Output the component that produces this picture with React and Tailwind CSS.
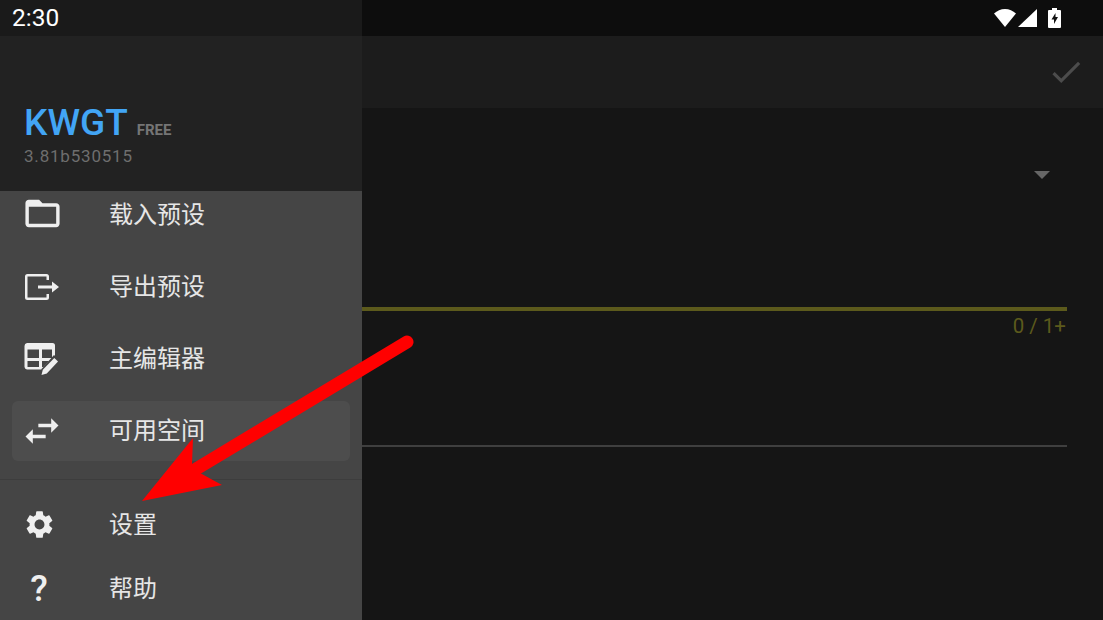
import React from "react";

const FONT = { fontFamily: '"Roboto", "Noto Sans CJK SC", sans-serif' };

function MenuIcon({ children, size = 41, className = "" }) {
  return (
    <svg width={size} height={size} viewBox="0 0 24 24" fill="#efefef" className={className}>
      {children}
    </svg>
  );
}

const icons = {
  folder: (
    <MenuIcon size={41}>
      <path d="M20 6h-8l-2-2H4c-1.1 0-1.99.9-1.99 2L2 18c0 1.1.9 2 2 2h16c1.1 0 2-.9 2-2V8c0-1.1-.9-2-2-2zm0 12H4V8h16v10z" />
    </MenuIcon>
  ),
  export: (
    <svg width="36" height="28" viewBox="0 0 36 28" fill="#efefef">
      <path d="M3.500 1h19a2.500 2.500 0 0 1 2.500 2.500V7h-2.500V3.500H3.500v21h19V21H25v3.500a2.500 2.500 0 0 1-2.500 2.500h-19A2.500 2.500 0 0 1 1 24.500v-21A2.500 2.500 0 0 1 3.500 1z" />
      <path d="M14 12.500h14V8.500l7 5.500-7 5.500v-4H14z" />
    </svg>
  ),
  table: (
    <svg width="36" height="33" viewBox="0 0 36 33" fill="#efefef">
      <path fillRule="evenodd" d="M3 0h25.500A2.500 2.500 0 0 1 31 2.500V13L19 26.500H3A3 3 0 0 1 .500 24V3A3 3 0 0 1 3 0zM3.500 6.500V15H15V6.500zM18 6.500V15h10V6.500zM3.500 18v6H15v-6zM18 18v6h1.500l5.500-6z" />
      <path d="M16 33.500l1.500-7.500L30 12l6 5.500L23 31.500z" fill="#454545" />
      <path d="M17.500 32l1.300-5.200L30.300 15l3.700 3.400L22.800 30.500z" />
    </svg>
  ),
  swap: (
    <MenuIcon size={44}>
      <path d="M6.99 11L3 15l3.99 4v-3H14v-2H6.99v-3zM21 9l-3.990-4v3H10v2h7.010v3L21 9z" />
    </MenuIcon>
  ),
  gear: (
    <MenuIcon size={33}>
      <path d="M19.140 12.940c.04-.3.060-.61.060-.94 0-.32-.020-.64-.070-.94l2.030-1.580a.49.49 0 0 0 .12-.61l-1.920-3.320a.488.488 0 0 0-.59-.22l-2.390.96c-.5-.38-1.030-.7-1.620-.94l-.36-2.540a.484.484 0 0 0-.48-.41h-3.840c-.24 0-.43.17-.47.41l-.36 2.540c-.59.24-1.130.57-1.620.94l-2.390-.96c-.22-.08-.47 0-.59.22L2.740 8.870c-.12.21-.08.47.12.61l2.030 1.580c-.05.3-.09.63-.09.94s.02.64.07.94l-2.030 1.580a.49.49 0 0 0-.12.61l1.920 3.320c.12.22.37.29.59.22l2.390-.96c.5.38 1.030.7 1.620.94l.36 2.540c.05.24.24.41.48.41h3.840c.24 0 .44-.17.47-.41l.36-2.540c.59-.24 1.130-.56 1.620-.94l2.390.96c.22.08.47 0 .59-.22l1.920-3.320c.12-.22.070-.47-.12-.61l-2.010-1.580zM12 15.600c-1.980 0-3.600-1.620-3.600-3.600s1.620-3.600 3.600-3.600 3.600 1.620 3.600 3.600-1.620 3.600-3.600 3.600z" />
    </MenuIcon>
  ),
  help: <span className="text-[36px] font-medium leading-none text-[#efefef]">?</span>,
};

function Item({ icon, label, iconClass = "", active, className = "" }) {
  return (
    <div
      className={`mx-3 flex h-[60px] items-center rounded-md ${active ? "bg-[#4d4d4d]" : ""} ${className}`}
    >
      <div className={`flex w-[60px] shrink-0 items-center justify-center ${iconClass}`}>{icon}</div>
      <span className="ml-[37px] text-2xl leading-none text-[#e6e6e6]">{label}</span>
    </div>
  );
}

export default function App() {
  return (
    <div className="relative h-[620px] w-[1103px] overflow-hidden bg-[#151515]" style={FONT}>
      {/* page behind the drawer */}
      <div className="flex h-9 items-center justify-end gap-[2px] bg-[#0d0d0d] pr-[42px]">
        <svg width="22" height="18" viewBox="0 0 22 18" fill="#fff">
          <path d="M11 18L0 4.500C3 1.800 6.800 0 11 0s8 1.800 11 4.500z" />
        </svg>
        <svg width="19" height="18" viewBox="0 0 19 18" fill="#fff">
          <path d="M19 0v18H0z" />
        </svg>
        <svg width="13" height="20" viewBox="0 0 13 20" className="ml-[9px]">
          <path d="M4 0h5v2h3a1 1 0 0 1 1 1v16a1 1 0 0 1-1 1H1a1 1 0 0 1-1-1V3a1 1 0 0 1 1-1h3z" fill="#fff" />
          <path d="M7.500 5L3.500 11.500h2.500V16l4-7H7.500z" fill="#111" />
        </svg>
      </div>
      <div className="flex h-[72px] items-center justify-end bg-[#1c1c1c] pr-[18px]">
        <svg width="38" height="38" viewBox="0 0 24 24" fill="#4c4c4c">
          <path d="M9 16.170L4.830 12l-1.420 1.410L9 19 21 7l-1.410-1.410z" />
        </svg>
      </div>
      <div className="flex flex-col items-stretch pl-[362px] pr-9">
        <div className="flex h-[199px] justify-end pt-[63px] pr-[17px]">
          <div className="h-0 w-0 border-x-[8px] border-t-[8px] border-x-transparent border-t-[#666]" />
        </div>
        <div className="h-[4px] bg-[#5c5a1c]" />
        <div className="mt-[1px] pr-px text-right text-[20.5px] leading-[28px] text-[#5c5a1c]">0 / 1+</div>
        <div className="mt-[105px] h-[2px] bg-[#3f3f3f]" />
      </div>

      {/* navigation drawer */}
      <aside className="absolute inset-y-0 left-0 flex w-[362px] flex-col bg-[#454545]">
        <div className="flex h-9 shrink-0 items-center bg-[#1a1a1a] pl-3 text-[24.5px] leading-none text-white">2:30</div>
        <header className="z-10 flex h-[155px] shrink-0 flex-col bg-[#222222] pl-[24px] pt-[66px]">
          <div className="flex items-baseline">
            <span className="text-[37px] font-medium leading-[42px] text-[#42a5f5]">KWGT</span>
            <span className="ml-[9px] text-[15px] font-bold leading-none text-[#757575]">FREE</span>
          </div>
          <div className="mt-[2px] text-[17px] leading-[20px] tracking-[0.8px] text-[#6e6e6e]">3.81b530515</div>
        </header>
        <nav className="-mt-[6px] flex flex-1 flex-col">
          <div className="flex flex-col gap-3">
            <Item icon={icons.folder} label="载入预设" iconClass="pb-[4px]" />
            <Item icon={icons.export} label="导出预设" />
            <Item icon={icons.table} label="主编辑器" />
            <Item icon={icons.swap} label="可用空间" active />
          </div>
          <div className="mt-[18px] h-px bg-[#3d3d3d]" />
          <Item icon={icons.gear} label="设置" iconClass="pr-[6px] pb-[2px]" className="mt-[15px]" />
          <Item icon={icons.help} label="帮助" iconClass="pr-[6px]" className="mt-[4px]" />
        </nav>
      </aside>

      {/* red annotation arrow */}
      <svg className="pointer-events-none absolute inset-0" width="1103" height="620" viewBox="0 0 1103 620">
        <line x1="407" y1="342" x2="196" y2="469" stroke="#ff0000" strokeWidth="13" strokeLinecap="round" />
        <polygon points="142,501 193,438 192,464 200,473 222,485" fill="#ff0000" />
      </svg>
    </div>
  );
}
